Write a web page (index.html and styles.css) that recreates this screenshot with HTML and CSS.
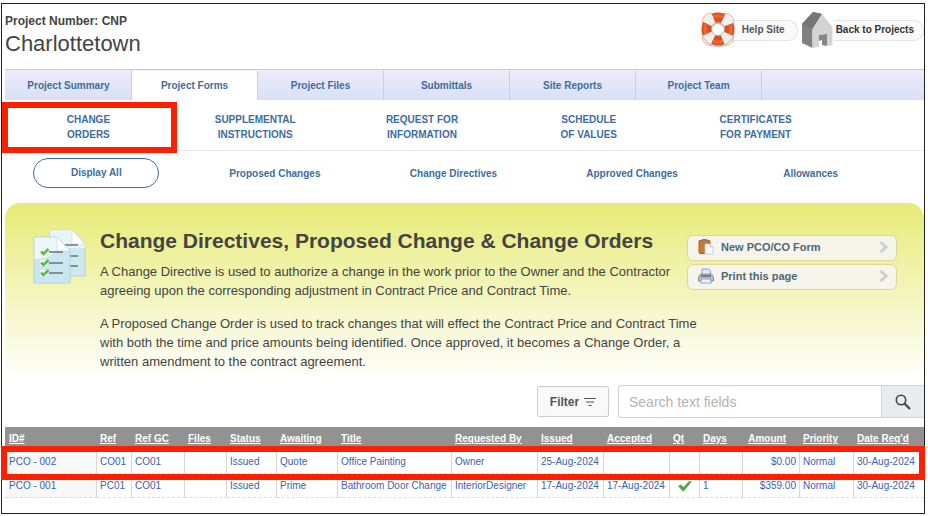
FILE: index.html
```html
<!DOCTYPE html>
<html lang="en">
<head>
	<meta charset="utf-8">
	<title>Charlottetown - Change Orders</title>
	<link rel="stylesheet" href="styles.css">
</head>
<body>
<div class="page">
	<header class="header">
		<div class="project">
			<p class="project-number">Project Number: CNP</p>
			<h1 class="project-name">Charlottetown</h1>
		</div>
		<div class="header-links">
			<a href="#" class="header-link help">
				<svg width="34" height="36" viewBox="0 0 34 36">
					<rect x="1.500" y="1.500" width="31" height="32" rx="8" fill="none" stroke="#eda584"/>
					<circle cx="17" cy="18.500" r="11.500" fill="none" stroke="#c9c3bd" stroke-width="10"/>
					<circle cx="17" cy="17" r="11.500" fill="none" stroke="#f1eeeb" stroke-width="10"/>
					<circle cx="17" cy="17" r="11.500" fill="none" stroke="#dd4f1e" stroke-width="10" stroke-dasharray="9.600 8.464" stroke-dashoffset="4.800"/>
					<circle cx="17" cy="17" r="13" fill="none" stroke="#e9683a" stroke-width="3" stroke-dasharray="10.850 9.570" stroke-dashoffset="5.425"/>
					<circle cx="17" cy="17" r="6.500" fill="none" stroke="#b9a49a" stroke-width=".8"/>
				</svg>
				<span>Help Site</span>
			</a>
			<a href="#" class="header-link back">
				<svg width="32" height="36" viewBox="0 0 32 36">
					<path d="M0 12 11 0 20 2 10.500 17V36L0 31Z" fill="#808080"/>
					<path d="M11 0 20 2 10.500 17 0 12Z" fill="#757575"/>
					<path d="M20 2 30.500 15V33L25 34V22L17 23V34.500L10.500 36V17Z" fill="#d3d3d3"/>
					<path d="M17 23 25 22V34L20 33V28L17 29Z" fill="#868686"/>
				</svg>
				<span>Back to Projects</span>
			</a>
		</div>
	</header>

	<nav class="tabs">
		<a href="#">Project Summary</a>
		<a href="#" class="active">Project Forms</a>
		<a href="#">Project Files</a>
		<a href="#">Submittals</a>
		<a href="#">Site Reports</a>
		<a href="#">Project Team</a>
	</nav>

	<nav class="forms-nav">
		<a href="#" class="marked">CHANGE<br>ORDERS</a>
		<a href="#">SUPPLEMENTAL<br>INSTRUCTIONS</a>
		<a href="#">REQUEST FOR<br>INFORMATION</a>
		<a href="#">SCHEDULE<br>OF VALUES</a>
		<a href="#">CERTIFICATES<br>FOR PAYMENT</a>
	</nav>

	<nav class="views-nav">
		<a href="#"><span class="pill">Display All</span></a>
		<a href="#">Proposed Changes</a>
		<a href="#">Change Directives</a>
		<a href="#">Approved Changes</a>
		<a href="#">Allowances</a>
	</nav>

	<section class="intro">
		<svg class="intro-icon" width="54" height="56" viewBox="0 0 54 56">
			<path d="M17 1H39L52 15V47H17Z" fill="#cfe7f0" stroke="#b5d3d3"/>
			<path d="M17 1H39L52 15V19H17Z" fill="#e8f4f8"/>
			<path d="M39 1V15H52Z" fill="#fff" stroke="#c5dcde" stroke-width=".6"/>
			<path d="M28 16H45M36 27H45M36 37H45" stroke="#6d7478" stroke-width="1.4"/>
			<path d="M1 8H24L37 22V54H1Z" fill="#cce6f1" stroke="#b3d2d4"/>
			<path d="M1.500 8.500H24L30 16C20 25 14 30 1.500 30Z" fill="#eef7fa"/>
			<path d="M24 8V22H37Z" fill="#fff" stroke="#c5dcde" stroke-width=".6"/>
			<path d="M16 23H30M16 34H30M16 44H30" stroke="#6d7478" stroke-width="1.4"/>
			<path d="M7 20H14V26H7ZM7 31H14V37H7ZM7 41H14V47H7Z" fill="#f4f9fa"/>
			<path d="M8 22.500 10.500 25 15.500 20M8 33.500 10.500 36 15.500 31M8 43.500 10.500 46 15.500 41" fill="none" stroke="#5cbb46" stroke-width="2.6"/>
		</svg>
		<div class="intro-text">
			<h2>Change Directives, Proposed Change &amp; Change Orders</h2>
			<p>A Change Directive is used to authorize a change in the work prior to the Owner and the Contractor<br>agreeing upon the corresponding adjustment in Contract Price and Contract Time.</p>
			<p>A Proposed Change Order is used to track changes that will effect the Contract Price and Contract Time<br>with both the time and price amounts being identified. Once approved, it becomes a Change Order, a<br>written amendment to the contract agreement.</p>
		</div>
		<div class="actions">
			<button type="button">
				<svg width="16" height="16" viewBox="0 0 16 16">
					<rect x="1" y="1.500" width="11" height="13" rx="1" fill="#c77b2b" stroke="#a9621c"/>
					<rect x="3.500" y="0" width="6" height="3" rx="1" fill="#85807a"/>
					<path d="M7 5H12L15 8V15H7Z" fill="#fff" stroke="#bcc4cc" stroke-width=".8"/>
					<path d="M12 5V8H15" fill="#dde3e8" stroke="#bcc4cc" stroke-width=".8"/>
				</svg>
				<span>New PCO/CO Form</span>
				<svg class="chevron" width="9" height="12" viewBox="0 0 9 12"><path d="M1.500 1 7 6 1.500 11" fill="none" stroke="#c7d2ce" stroke-width="3"/></svg>
			</button>
			<button type="button">
				<svg width="16" height="16" viewBox="0 0 16 16">
					<path d="M4 7V1H10.500L12.500 3V7Z" fill="#dcecfb" stroke="#6fa3dc"/>
					<path d="M2.500 6H13.500L15.500 9V13H.5V9Z" fill="#b9bcc4" stroke="#7d8088" stroke-width=".8"/>
					<path d="M3 8H13" stroke="#5f636c" stroke-width="1.5"/>
					<path d="M3.500 11H12.500L13.500 15H2.500Z" fill="#e9f2fb" stroke="#6fa3dc" stroke-width=".8"/>
				</svg>
				<span>Print this page</span>
				<svg class="chevron" width="9" height="12" viewBox="0 0 9 12"><path d="M1.500 1 7 6 1.500 11" fill="none" stroke="#c7d2ce" stroke-width="3"/></svg>
			</button>
		</div>
	</section>

	<form class="toolbar">
		<button type="button" class="filter">Filter
			<svg width="12" height="10" viewBox="0 0 12 10"><path d="M0 1.500H12M2 5H10M4.500 8.500H7.500" stroke="#555" stroke-width="1.2"/></svg>
		</button>
		<div class="search">
			<input type="text" placeholder="Search text fields" aria-label="Search text fields">
			<button type="submit" aria-label="Search">
				<svg width="16" height="16" viewBox="0 0 16 16" fill="none" stroke="#444"><circle cx="6" cy="6" r="4.700" stroke-width="1.600"/><path d="M9.500 9.500 15 15" stroke-width="2.200"/></svg>
			</button>
		</div>
	</form>

	<table class="orders">
		<colgroup>
			<col class="c-id"><col class="c-ref"><col class="c-gc"><col class="c-files"><col class="c-status">
			<col class="c-awaiting"><col class="c-title"><col class="c-by"><col class="c-date"><col class="c-date">
			<col class="c-qt"><col class="c-days"><col class="c-amount"><col class="c-priority"><col class="c-req">
		</colgroup>
		<thead>
			<tr>
				<th><a href="#">ID#</a></th>
				<th><a href="#">Ref</a></th>
				<th><a href="#">Ref GC</a></th>
				<th><a href="#">Files</a></th>
				<th><a href="#">Status</a></th>
				<th><a href="#">Awaiting</a></th>
				<th><a href="#">Title</a></th>
				<th><a href="#">Requested By</a></th>
				<th><a href="#">Issued</a></th>
				<th><a href="#">Accepted</a></th>
				<th><a href="#">Qt</a></th>
				<th><a href="#">Days</a></th>
				<th class="num head-amount"><a href="#">Amount</a></th>
				<th><a href="#">Priority</a></th>
				<th><a href="#">Date Req'd</a></th>
			</tr>
		</thead>
		<tbody>
			<tr class="marked">
				<td>PCO - 002</td>
				<td>CO01</td>
				<td>CO01</td>
				<td></td>
				<td>Issued</td>
				<td>Quote</td>
				<td>Office Painting</td>
				<td>Owner</td>
				<td>25-Aug-2024</td>
				<td></td>
				<td></td>
				<td></td>
				<td class="num">$0.00</td>
				<td>Normal</td>
				<td>30-Aug-2024</td>
			</tr>
			<tr>
				<td>PCO - 001</td>
				<td>PC01</td>
				<td>CO01</td>
				<td></td>
				<td>Issued</td>
				<td>Prime</td>
				<td>Bathroom Door Change</td>
				<td>InteriorDesigner</td>
				<td>17-Aug-2024</td>
				<td>17-Aug-2024</td>
				<td class="tick"><svg width="14" height="12" viewBox="0 0 14 12"><path d="M0 6 3 4.500 5.500 7 11 1 14 1.500 6 11 4.500 11Z" fill="#55a94c"/></svg></td>
				<td>1</td>
				<td class="num">$359.00</td>
				<td>Normal</td>
				<td>30-Aug-2024</td>
			</tr>
		</tbody>
	</table>
</div>
</body>
</html>
```
FILE: styles.css
```css
*{
	box-sizing: border-box;
	margin: 0;
	padding: 0;
}
body{
	background-color: #fff;
	color: #444;
	font-family: "Liberation Sans", Arial, sans-serif;
	font-size: 10px;
}
a{
	color: #3d6d9e;
	text-decoration: none;
}
svg{
	display: block;
	flex: none;
}
button{
	font-family: inherit;
}
.page{
	margin: 3px 3px 0 1px;
	padding: 0 0 15px 3px;
	border: 1px solid #222;
}

/* header */
.header{
	display: flex;
	justify-content: space-between;
	height: 65px;
}
.project{
	padding-top: 9px;
}
.project-number{
	font-size: 12px;
	font-weight: bold;
	line-height: 16px;
}
.project-name{
	font-size: 22px;
	font-weight: normal;
	line-height: 30px;
}
.header-links{
	display: flex;
	gap: 4px;
	padding-top: 8px;
}
.header-link{
	display: flex;
	height: 36px;
	align-items: center;
	color: #555;
	font-weight: bold;
}
.header-link span{
	height: 21px;
	padding: 0 12px 0 11px;
	margin-left: -4px;
	border: 1px solid #e4e4e4;
	border-left: 0;
	border-radius: 0 10px 10px 0;
	background-color: #fafafa;
	line-height: 18px;
}
.header-link svg{
	position: relative;
}
.back span{
	margin-left: 0;
	padding: 0 9px 0 2px;
	color: #333;
}

/* navigation */
.tabs{
	display: flex;
	height: 31px;
	padding: 1px 0 0 1px;
	border-top: 1px solid #c5c9ef;
	background: linear-gradient(#ececfa, #d9e0f6);
	font-weight: bold;
}
.tabs a{
	flex: 0 1 126px;
	border-right: 1px solid #c5cbf3;
	line-height: 29px;
	text-align: center;
}
.tabs .active{
	background-color: #fff;
	border-radius: 2px 2px 0 0;
}
.forms-nav{
	display: flex;
	height: 51px;
	padding: 12px 0 0;
	border-bottom: 1px solid #e6e6e6;
	font-weight: bold;
	line-height: 15px;
	text-align: center;
}
.forms-nav a{
	flex: 0 0 18.15%;
	position: relative;
}
.forms-nav .marked::after{
	content: "";
	position: absolute;
	top: -10px;
	right: -5px;
	bottom: -3px;
	left: -3px;
	border: 6px solid #fa2000;
}
.views-nav{
	display: flex;
	align-items: center;
	height: 44px;
	margin: 0 24px 8px 2px;
	font-weight: bold;
	text-align: center;
}
.views-nav a{
	flex: 1;
}
.pill{
	display: block;
	width: 126px;
	margin: 0 auto;
	border: 1px solid #3d6d9e;
	border-radius: 15px;
	line-height: 28px;
}

/* intro */
.intro{
	display: flex;
	align-items: flex-start;
	min-height: 177px;
	padding: 26px 27px 0 28px;
	border-radius: 15px 15px 0 0;
	background: linear-gradient(#e7eb76, #fff);
}
.intro-text{
	flex: 1;
	min-width: 0;
	margin-left: 13px;
	white-space: nowrap;
}
.intro-text h2{
	margin-bottom: 9px;
	font-size: 21px;
	line-height: 24px;
}
.intro-text p{
	font-size: 13px;
	line-height: 19px;
}
.intro-text p + p{
	margin-top: 14px;
}
.actions{
	display: grid;
	flex: 0 0 210px;
	gap: 3px;
	padding-top: 6px;
}
.actions button{
	display: flex;
	align-items: center;
	gap: 7px;
	height: 26px;
	padding: 0 8px 2px 10px;
	border: 1px solid #e2d59c;
	border-radius: 6px;
	background-color: #f7f4ec;
	color: #4c6977;
	font-size: 11px;
	font-weight: bold;
}
.chevron{
	margin-left: auto;
}

/* filter and search */
.toolbar{
	display: flex;
	justify-content: flex-end;
	align-items: center;
	gap: 9px;
	height: 33px;
	margin: 5px 0 9px;
}
.filter{
	display: flex;
	align-items: center;
	justify-content: center;
	gap: 5px;
	width: 72px;
	height: 31px;
	border: 1px solid #ccc;
	border-radius: 2px;
	background-color: #f9f9f9;
	color: #555;
	font-size: 12px;
	font-weight: bold;
}
.search{
	display: flex;
	flex: 0 0 306px;
	height: 33px;
	border: 1px solid #ced4da;
	border-right: 0;
	border-radius: 3px 0 0 3px;
}
.search input{
	flex: 1;
	min-width: 0;
	padding: 0 10px;
	border: 0;
	background: none;
	color: #444;
	font-family: inherit;
	font-size: 14px;
}
.search input::placeholder{
	color: #b4b4b4;
}
.search button{
	display: flex;
	align-items: center;
	justify-content: center;
	width: 43px;
	border: 0;
	border-left: 1px solid #ced4da;
	background-color: #e9ecef;
}

/* change order list */
.orders{
	width: 100%;
	border-collapse: separate;
	border-spacing: 0;
	table-layout: fixed;
}
.orders th,
.orders td{
	padding: 0 3px;
	text-align: left;
	white-space: nowrap;
}
.orders th:first-child,
.orders td:first-child{
	padding-left: 4px;
}
.orders th{
	height: 23px;
	background-color: #929292;
}
.orders th a{
	color: #fff;
	text-decoration: underline;
}
.orders td{
	height: 24px;
	border-right: 1px solid #d6d6d6;
	border-bottom: 1px dashed #ddd;
	color: #3b62ad;
}
.orders td:first-child{
	background-color: #f8f8f8;
}
.orders td:last-child{
	border-right: 0;
}
.orders .num{
	text-align: right;
}
.orders .head-amount{
	padding-right: 14px;
}
.orders .tick svg{
	margin: 0 auto;
}
.orders .marked{
	position: relative;
}
.orders .marked td:first-child::after{
	content: "";
	position: absolute;
	top: -4px;
	right: -1px;
	bottom: -6px;
	left: -4px;
	border: 6px solid #fa2000;
}
.c-id{ width: 92px; }
.c-ref{ width: 35px; }
.c-gc{ width: 53px; }
.c-files{ width: 42px; }
.c-status{ width: 50px; }
.c-awaiting{ width: 61px; }
.c-title{ width: 114px; }
.c-by{ width: 86px; }
.c-date{ width: 66px; }
.c-qt{ width: 30px; }
.c-days{ width: 43px; }
.c-amount{ width: 57px; }
.c-priority{ width: 54px; }
```
